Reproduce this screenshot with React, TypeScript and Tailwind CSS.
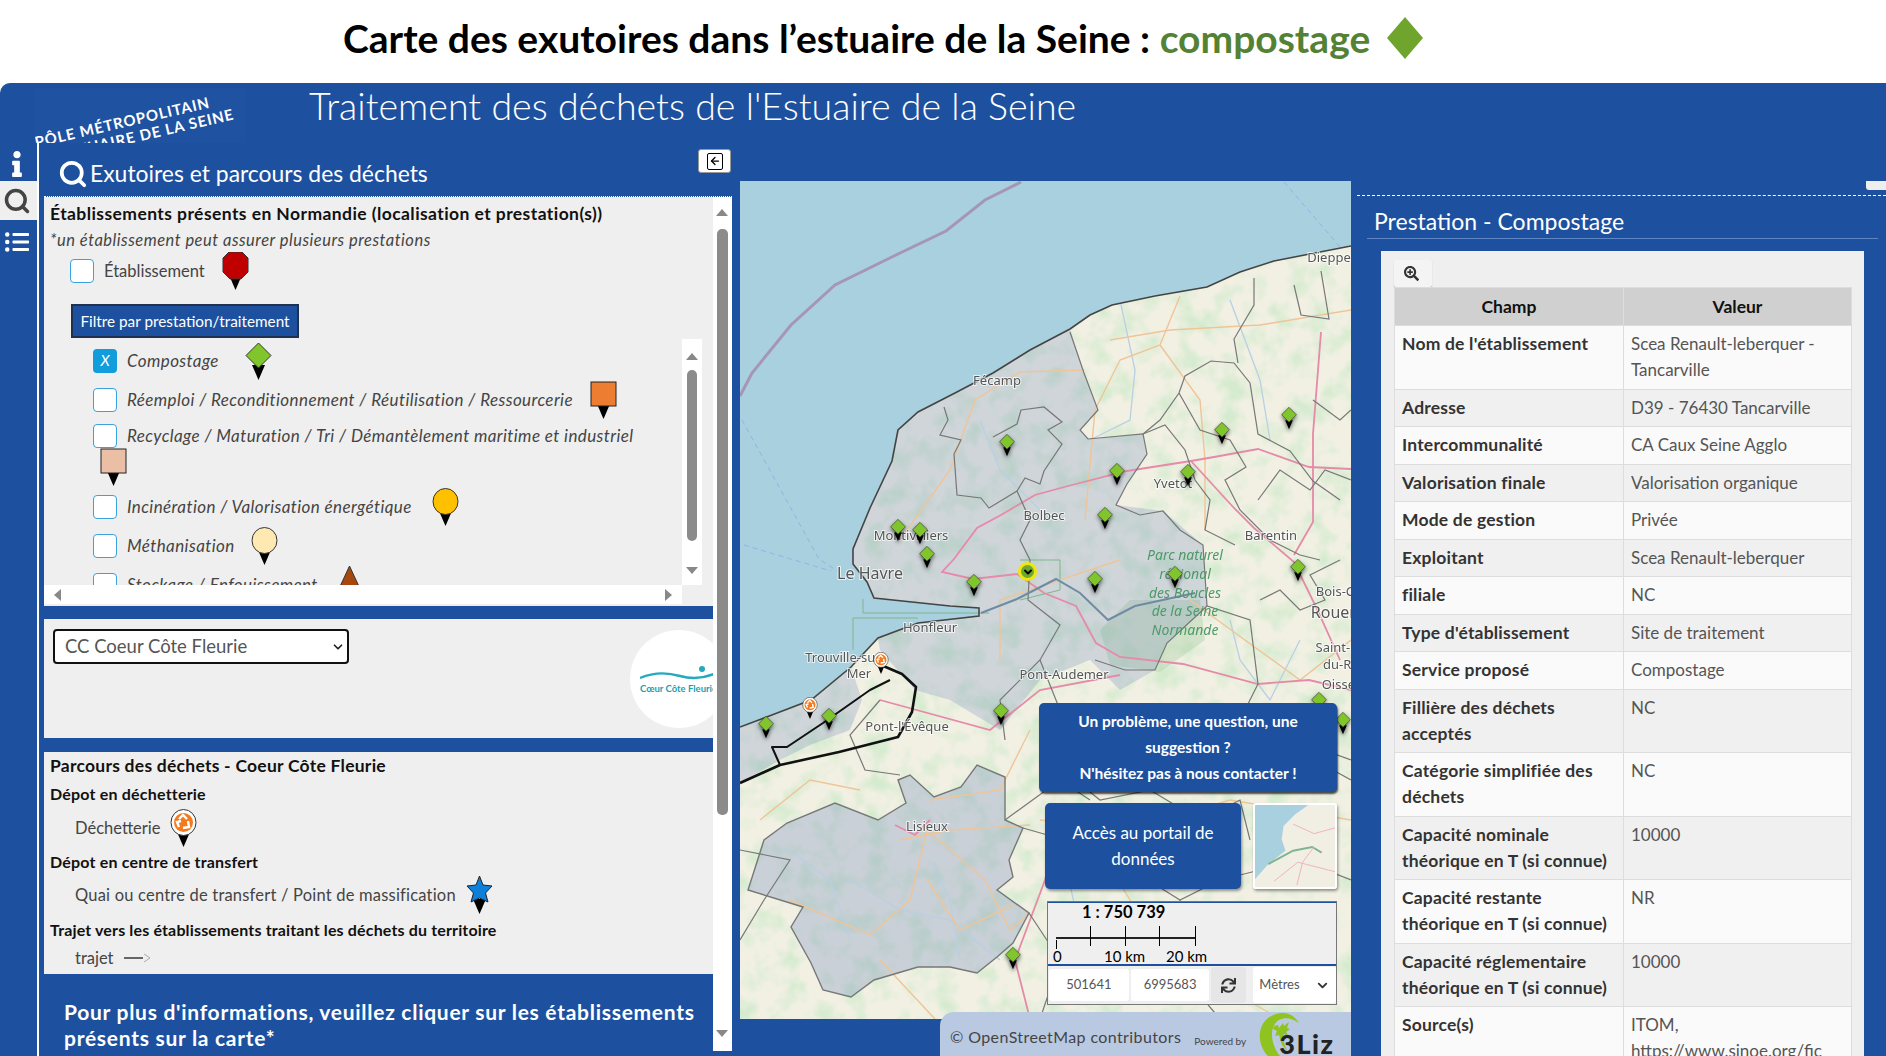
import { ArrowLeft, ChevronDown, Search } from "lucide-react";
import { FaInfo, FaListUl, FaSearchPlus, FaSync } from "react-icons/fa";

type PinKind = "octagon" | "diamond" | "orange" | "peach" | "yellow" | "cream" | "triangle" | "star" | "recycle";

function Pin({ kind, className }: { kind: PinKind; className?: string }) {
  return (
    <svg viewBox="0 0 27 38" className={className}>
      <polygon points="7,23 20,23 13.5,38" fill="#000" />
      {kind === "octagon" && <polygon points="7,0 20,0 26,6 26,20 19,27 8,27 1,20 1,6" fill="#c00000" stroke="#333" />}
      {kind === "diamond" && <polygon points="13.5,1 26,13.5 13.5,26 1,13.5" fill="#7fc52b" stroke="#333" />}
      {kind === "orange" && <rect x="1" y="1" width="25" height="24" fill="#ed7d31" stroke="#222" />}
      {kind === "peach" && <rect x="1" y="1" width="25" height="24" fill="#ebbfa6" stroke="#222" />}
      {kind === "yellow" && <ellipse cx="13.5" cy="13.5" rx="12.5" ry="13" fill="#ffc000" stroke="#333" />}
      {kind === "cream" && <ellipse cx="13.5" cy="13.5" rx="12.5" ry="13" fill="#ffe9b3" stroke="#333" />}
      {kind === "triangle" && <polygon points="13.5,0 26,27 1,27" fill="#a6470e" stroke="#333" />}
      {kind === "star" && (
        <polygon
          points="13.5,0 17,9 26,10 19.5,17 22,26 13.5,22 5,26 7.5,17 1,10 10,9"
          fill="#0f7fdc"
          stroke="#222"
        />
      )}
      {kind === "recycle" && (
        <>
          <ellipse cx="13.5" cy="13.5" rx="12.5" ry="13" fill="#fff" stroke="#333" />
          <circle cx="13.5" cy="13.5" r="9.5" fill="#f47a20" />
          <path d="M9 10l4-4 4 4M18 12l1 6-6 1M9 18l-2-5 4-1" fill="none" stroke="#fff" strokeWidth="2.4" />
        </>
      )}
    </svg>
  );
}

function Check({ checked }: { checked?: boolean }) {
  return checked ? (
    <span className="w-[24px] h-[24px] shrink-0 rounded-[4px] bg-[#119ddb] text-white text-[15px] flex items-center justify-center">
      X
    </span>
  ) : (
    <span className="w-[24px] h-[24px] shrink-0 rounded-[4px] bg-white border border-[#38a3de]" />
  );
}

function LegendRow({ label, pin, gap, checked }: { label: string; pin: PinKind; gap: string; checked?: boolean }) {
  return (
    <div className="flex items-center h-[39px] pl-[49px] italic">
      <Check checked={checked} />
      <span className="ml-[10px] text-[17px] tracking-[0.4px] text-[#444] whitespace-nowrap">{label}</span>
      <Pin kind={pin} className={`w-[27px] h-[38px] shrink-0 ${gap}`} />
    </div>
  );
}

const sea =
  "740,181 1351,181 1351,246 1320,252 1274,261 1240,272 1207,287 1155,296 1112,305 1090,315 1070,329 1030,350 993,373 955,393 918,412 898,430 892,461 870,508 853,549 853,564 867,582 874,598 950,606 979,608 979,616 918,623 878,638 851,667 811,700 764,718 740,727";

const estuary =
  "1070,329 1084,373 1098,410 1080,430 1088,439 1143,434 1147,454 1127,484 1116,505 1163,511 1203,545 1207,606 1167,643 1155,670 1120,690 1090,660 1040,680 1000,730 950,700 915,690 880,650 878,638 918,623 979,616 979,608 950,606 874,598 867,582 853,564 853,549 870,508 892,461 898,430 918,412 955,393 993,373 1030,350";

const coteFleurie = "740,727 764,718 811,700 851,667 862,700 850,730 810,745 780,760 740,783";

const lisieux =
  "898,780 910,775 934,797 961,787 977,765 1005,777 1005,820 1023,828 1009,860 1013,877 997,890 1029,913 1013,943 997,957 977,973 950,967 918,967 874,980 851,997 823,990 811,963 791,927 803,907 748,890 764,840 787,823 835,803 878,820 906,803";

const boundaries = [
  "944,407 948,420 940,435 961,440 954,454 957,495 981,498 989,508 1017,491 1025,478 1040,484 1044,471 1062,444 1048,430 1062,422 1044,407 1021,410 1017,424 993,437",
  "1070,332 1084,373 1098,410 1080,430 1088,439 1143,434 1147,454 1127,484 1116,505 1140,515 1163,511 1180,530 1203,545 1207,606",
  "1143,434 1160,420 1179,393 1185,376 1211,361 1234,363 1250,383 1258,434 1290,451 1313,481 1340,500",
  "1179,393 1200,430 1230,440 1246,467 1225,480 1240,510 1270,540 1300,555 1320,560",
  "1254,278 1254,305 1234,339 1238,363",
  "1294,285 1301,315 1329,319 1321,271",
  "1143,434 1165,425 1185,450 1195,480 1210,500 1205,530 1235,545",
  "1313,400 1340,420 1351,410",
  "1258,500 1280,470 1310,490 1325,470 1351,480",
  "1340,560 1310,575 1325,600 1300,610 1280,590 1260,600",
  "1017,491 1030,520 1020,540 1030,560 1028,600 1060,625 1040,660 1000,700 1005,740",
  "1095,660 1125,670 1155,670 1167,643 1207,606 1250,620 1258,684 1240,720 1351,760",
  "880,700 850,735 865,770 900,775",
  "1040,660 1060,710 1050,760 1100,800 1150,790 1170,730 1220,760 1260,730 1351,780",
  "1023,828 1100,850 1180,900 1220,880 1300,860 1351,880",
  "1029,913 1060,960 1040,1019",
  "740,850 790,860 764,900 740,940",
  "1005,820 1060,780 1090,800",
  "1150,790 1200,820 1240,800 1250,840",
  "1180,900 1170,960 1220,1019",
];

const pinkRoads = [
  "1351,469 1309,467 1258,449 1214,457 1191,461 1127,471 1068,486 1035,495 1001,515 977,528 954,559 942,572 973,579 1017,574 1044,593 1076,606 1096,643 1120,657 1183,664 1258,684 1309,680 1351,690",
  "1191,461 1234,508 1254,528 1294,562 1317,609 1340,660",
  "1321,332 1313,434 1313,522 1294,555",
  "1030,1019 1015,960 1045,880 1060,820",
  "930,820 915,835 895,825",
  "880,700 990,730 1040,690 1120,675",
];

const orangeRoads = [
  "1180,296 1160,345 1120,360 1095,410 1085,520",
  "1084,370 1020,372 975,400 950,470 900,540",
  "1351,310 1260,325 1170,330 1110,340",
  "1160,345 1200,400 1205,460 1205,530",
  "1120,560 1000,600 1000,660",
  "900,840 950,830 1030,825",
  "927,830 910,900 870,935 790,900",
  "927,830 985,880 1010,930 1029,913",
  "927,880 960,930 1013,905",
  "1040,820 1130,830 1230,800 1351,820",
  "880,960 935,1019",
  "1100,850 1160,950 1280,1019",
  "1030,730 1000,790 930,800",
  "1190,600 1300,680 1351,640",
  "760,820 810,780 860,790",
];

const rivers = [
  "1120,300 1135,370 1130,420 1090,440",
  "1230,300 1260,380 1270,440",
  "850,880 900,910 950,920 1000,960",
  "790,850 830,880 850,940",
  "930,860 950,900 960,960",
  "1060,840 1080,930 1140,1000",
  "980,420 1000,470 1050,520",
  "1230,620 1240,660 1270,700 1300,640",
];

const labels = [
  { t: "Fécamp", x: 997, y: 385, s: 13 },
  { t: "Bolbec", x: 1044, y: 520, s: 13 },
  { t: "Le Havre", x: 870, y: 579, s: 16 },
  { t: "Montivilliers", x: 911, y: 540, s: 13 },
  { t: "Yvetot", x: 1173, y: 488, s: 13 },
  { t: "Barentin", x: 1271, y: 540, s: 13 },
  { t: "Honfleur", x: 930, y: 632, s: 13 },
  { t: "Trouville-sur-", x: 845, y: 662, s: 13 },
  { t: "Mer", x: 859, y: 678, s: 13 },
  { t: "Pont-Audemer", x: 1064, y: 679, s: 13 },
  { t: "Dieppe", x: 1329, y: 262, s: 13 },
  { t: "Bois-Guillaume", x: 1362, y: 596, s: 13 },
  { t: "Rouen", x: 1335, y: 618, s: 16 },
  { t: "Saint-Étienne-", x: 1358, y: 652, s: 13 },
  { t: "du-Rouvray", x: 1358, y: 669, s: 13 },
  { t: "Oissel", x: 1340, y: 689, s: 13 },
  { t: "Pont-l'Évêque", x: 907, y: 731, s: 13 },
  { t: "Lisieux", x: 927, y: 831, s: 13 },
];

const parc = [
  { t: "Parc naturel", y: 560 },
  { t: "régional", y: 579 },
  { t: "des Boucles", y: 598 },
  { t: "de la Seine", y: 616 },
  { t: "Normande", y: 635 },
];

const mapPins = [
  [1007, 442], [1222, 430], [1289, 415], [1117, 471], [1188, 472], [1105, 515], [898, 527], [920, 530],
  [927, 554], [974, 582], [1095, 579], [1175, 574], [1298, 567], [1319, 700], [766, 724], [829, 716],
  [1001, 711], [1343, 720], [1013, 955],
];

function BaseMap() {
  return (
    <svg viewBox="740 181 611 838" className="absolute inset-0 w-full h-full blur-[0.5px]">
      <defs>
        {/* speckled forest patches, the tiles are too blurry to draw one by one */}
        <filter id="mottle" x="0" y="0" width="100%" height="100%">
          <feTurbulence type="fractalNoise" baseFrequency="0.045" numOctaves="3" seed="7" />
          <feColorMatrix values="0 0 0 0 0.66  0 0 0 0 0.83  0 0 0 0 0.62  0 2.6 0 0 -1.12" />
        </filter>
      </defs>
      <rect x="740" y="181" width="611" height="838" fill="#f1f0e3" />
      <rect x="740" y="181" width="611" height="838" filter="url(#mottle)" />
      <polygon points="1130,600 1200,600 1205,640 1160,672 1110,665 1100,630" fill="#a9cfa4" opacity="0.4" />
      <polygon points={sea} fill="#a9d0de" />
      <polygon points={estuary} fill="#6f88bd" opacity="0.26" />
      <polygon points={coteFleurie} fill="#6f88bd" opacity="0.26" />
      <polygon points={lisieux} fill="#6f88bd" opacity="0.3" />
      <polyline
        points="740,396 752,373 791,325 835,285 898,254 946,231 985,200 1021,182"
        fill="none"
        stroke="#a596b5"
        strokeWidth="3"
      />
      <g fill="none" stroke="#8fb4e6" strokeDasharray="5 4">
        <polyline points="1284,182 1341,248" />
        <polyline points="742,420 819,559 839,572" />
        <polyline points="744,545 831,571" />
      </g>
      <g fill="none" stroke="#7fb58e">
        <polyline points="863,599 863,613 989,613" />
        <polyline points="853,650 853,618 918,618" />
        <polyline points="1020,600 1060,590 1060,560 1020,560" />
      </g>
      <g fill="none" stroke="#b9cfe4" strokeWidth="1.3">
        {rivers.map((r) => (
          <polyline key={r} points={r} />
        ))}
      </g>
      <g fill="none" stroke="#efc597" strokeWidth="1.4">
        {orangeRoads.map((r) => (
          <polyline key={r} points={r} />
        ))}
      </g>
      <g fill="none" stroke="#e58aa8" strokeWidth="1.8">
        {pinkRoads.map((r) => (
          <polyline key={r} points={r} />
        ))}
      </g>
      <g fill="none" stroke="#777" strokeWidth="1.2">
        {boundaries.map((b) => (
          <polyline key={b} points={b} />
        ))}
      </g>
      <polygon points={lisieux} fill="none" stroke="#777" strokeWidth="1.4" />
      <polyline
        points="981,613 1017,599 1056,579 1080,593 1108,620 1135,606 1195,593"
        fill="none"
        stroke="#6f8ba3"
        strokeWidth="2"
      />
      <polyline
        points="1351,246 1320,252 1274,261 1240,272 1207,287 1155,296 1112,305 1090,315 1070,329 1030,350 993,373 955,393 918,412 898,430 892,461 870,508 853,549 853,564 867,582 874,598 950,606 979,608 979,616 918,623 878,638 851,667 811,700 764,718 740,727"
        fill="none"
        stroke="#444"
        strokeWidth="1.6"
      />
      <g fill="none" stroke="#111" strokeLinejoin="round">
        <polyline points="881,665 902,674 916,687 912,712 898,737 839,752 780,765 740,783" strokeWidth="2.6" />
        <polyline points="890,680 870,690 823,723 787,747 772,747 780,765" strokeWidth="2" />
      </g>
      {labels.map((l) => (
        <text
          key={l.t}
          x={l.x}
          y={l.y}
          textAnchor="middle"
          fontSize={l.s}
          fill="#555"
          stroke="#ffffff"
          strokeOpacity="0.7"
          strokeWidth="2"
          paintOrder="stroke"
          fontFamily="Noto Sans, sans-serif"
        >
          {l.t}
        </text>
      ))}
      {parc.map((l) => (
        <text
          key={l.t}
          x={1185}
          y={l.y}
          textAnchor="middle"
          fontSize="14"
          fontStyle="italic"
          fill="#4d9a6a"
          fontFamily="Noto Sans, sans-serif"
        >
          {l.t}
        </text>
      ))}
    </svg>
  );
}

function MiniMap() {
  return (
    <svg viewBox="0 0 84 86" className="w-full h-full">
      <rect width="84" height="86" fill="#f1efe4" />
      <polygon points="0,0 56,0 42,10 30,22 28,36 32,48 14,62 0,78" fill="#a9d0de" />
      <polyline points="14,62 40,48 60,44 70,50" fill="none" stroke="#7fb58e" strokeWidth="2" />
      <polyline points="40,20 62,30 84,24" fill="none" stroke="#eeb0c0" />
      <polyline points="20,80 45,60 84,70" fill="none" stroke="#eeb0c0" />
      <polyline points="44,84 50,60 62,44" fill="none" stroke="#eeb0c0" />
    </svg>
  );
}

function MapView() {
  return (
    <div className="relative w-[611px] h-[838px] overflow-hidden font-[Lato,sans-serif]">
      <BaseMap />
      {mapPins.map(([x, y]) => (
        <div key={`${x}-${y}`} className="absolute" style={{ left: x - 740 - 8, top: y - 181 - 9 }}>
          <Pin kind="diamond" className="w-[16px] h-[24px] drop-shadow-[0_2px_2px_rgba(0,0,0,0.6)]" />
        </div>
      ))}
      <div className="absolute left-[278px] top-[381px] w-[19px] h-[19px] rounded-full border-[3px] border-[#efe60f] bg-[#6fa82c] flex items-center justify-center">
        <ChevronDown className="w-[12px] h-[12px] text-black" strokeWidth={4} />
      </div>
      <Pin kind="recycle" className="absolute left-[133px] top-[471px] w-[16px] h-[22px]" />
      <Pin kind="recycle" className="absolute left-[62px] top-[516px] w-[16px] h-[22px]" />

      <div className="absolute left-[299px] top-[522px] w-[298px] h-[89px] rounded-[5px] bg-[#1d519f] text-white text-[15.5px] font-bold text-center leading-[26px] pt-[5px] shadow-[1px_2px_2px_rgba(0,0,0,0.7)]">
        Un problème, une question, une
        <br />
        suggestion ?
        <br />
        N'hésitez pas à nous contacter !
      </div>
      <div className="absolute left-[305px] top-[622px] flex gap-[12px]">
        <div className="w-[196px] h-[86px] rounded-[5px] bg-[#1d519f] text-white text-[17px] text-center leading-[26px] pt-[17px] shadow-[1px_2px_3px_rgba(0,0,0,0.4)]">
          Accès au portail de
          <br />
          données
        </div>
        <div className="w-[84px] h-[86px] rounded-[3px] border-[2px] border-white overflow-hidden shadow-[1px_2px_3px_rgba(0,0,0,0.4)]">
          <MiniMap />
        </div>
      </div>
      <div className="absolute left-[307px] top-[720px] w-[290px] border border-[#777]">
        <div className="relative h-[64px] bg-[#efefef] border-t border-b-2 border-[#1d519f] text-black">
          <div className="absolute left-[34px] -top-[3px] text-[16.5px] font-bold">1 : 750 739</div>
          <div className="absolute left-[8px] top-[34px] w-[140px] h-[2px] bg-[#222]" />
          <div className="absolute left-[8px] top-[37px] w-px h-[9px] bg-black" />
          <div className="absolute left-[42px] top-[23px] w-px h-[20px] bg-black" />
          <div className="absolute left-[77px] top-[23px] w-px h-[20px] bg-black" />
          <div className="absolute left-[111px] top-[23px] w-px h-[20px] bg-black" />
          <div className="absolute left-[147px] top-[23px] w-px h-[20px] bg-black" />
          <div className="absolute left-[5px] top-[44px] text-[15px] leading-[18px]">0</div>
          <div className="absolute left-[56px] top-[44px] text-[15px] leading-[18px]">10 km</div>
          <div className="absolute left-[118px] top-[44px] text-[15px] leading-[18px]">20 km</div>
        </div>
        <div className="flex items-center h-[38px] bg-[#efefef] gap-[2px] pl-[1px] text-[13px] text-[#555]">
          <div className="w-[80px] h-[32px] bg-white rounded-[3px] flex items-center justify-center">501641</div>
          <div className="w-[79px] h-[32px] bg-white rounded-[3px] flex items-center justify-center">6995683</div>
          <div className="w-[35px] h-[36px] flex items-center justify-center rounded-[3px] bg-[#e6e6e6] text-[#333]">
            <FaSync className="w-[15px] h-[15px]" />
          </div>
          <div className="ml-[5px] w-[83px] h-[36px] bg-white rounded-[3px] flex items-center justify-between px-[6px]">
            Mètres
            <ChevronDown className="w-[15px] h-[15px] text-[#333]" strokeWidth={3} />
          </div>
        </div>
      </div>
    </div>
  );
}

function Footer() {
  return (
    <div className="relative flex-1 flex justify-end">
      <div className="w-[411px] h-[44px] -mt-[7px] rounded-tl-[14px] bg-[#b9c9e2] flex items-start pl-[10px] pt-[14px] text-[#444] overflow-hidden">
        <span className="text-[16px] tracking-[0.4px] leading-[22px] whitespace-nowrap">© OpenStreetMap contributors</span>
        <span className="ml-[13px] mt-[8px] text-[10px] leading-[14px] whitespace-nowrap">Powered by</span>
        <div className="relative ml-[12px] h-[44px] w-[82px] -mt-[14px]">
          <svg viewBox="0 0 82 44" className="absolute left-0 top-0 w-[82px] h-[44px]">
            <path d="M10 44C-2 32-2 8 18 2c10-3 18 1 23 9-7-5-14-6-20-3-9 5-10 22 1 36z" fill="#8fc31f" />
            <path
              d="M16 14l4-1 1 3 4-5 1 3 5-4-2 6 3 1-4 3 3 4-5-2-1 4 2 8 3 6-6-7-3-10-4 1 2-5-4-2z"
              fill="#8fc31f"
            />
          </svg>
          <span className="absolute left-[21px] top-[15px] text-[27px] tracking-[1.5px] leading-[34px] font-black text-[#222]">
            3Liz
          </span>
        </div>
      </div>
    </div>
  );
}

const tableRows: [string, string][] = [
  ["Nom de l'établissement", "Scea Renault-leberquer - Tancarville"],
  ["Adresse", "D39 - 76430 Tancarville"],
  ["Intercommunalité", "CA Caux Seine Agglo"],
  ["Valorisation finale", "Valorisation organique"],
  ["Mode de gestion", "Privée"],
  ["Exploitant", "Scea Renault-leberquer"],
  ["filiale", "NC"],
  ["Type d'établissement", "Site de traitement"],
  ["Service proposé", "Compostage"],
  ["Fillière des déchets acceptés", "NC"],
  ["Catégorie simplifiée des déchets", "NC"],
  ["Capacité nominale théorique en T (si connue)", "10000"],
  ["Capacité restante théorique en T (si connue)", "NR"],
  ["Capacité réglementaire théorique en T (si connue)", "10000"],
  ["Source(s)", "ITOM, https://www.sinoe.org/fic"],
];

function DetailPanel() {
  return (
    <div className="w-[535px] relative pt-[52px]">
      <div className="absolute right-0 top-[38px] w-[20px] h-[9px] rounded-bl-[3px] bg-[#eee]" />
      <div className="ml-[6px] border-t border-dashed border-white" />
      <div className="ml-[16px] mr-[8px] mt-[10px] h-[33px] border-b border-[#5f86c4] pl-[7px] text-white text-[23px] leading-[30px]">
        Prestation - Compostage
      </div>
      <div className="ml-[30px] mr-[22px] mt-[12px] h-[805px] bg-[#efefef] px-[13px] pt-[9px] overflow-hidden">
        <div className="w-[38px] h-[27px] rounded-[2px] bg-[#f4f4f4] shadow-[0_1px_1px_rgba(0,0,0,0.3)] flex items-center pl-[10px] text-[#333]">
          <FaSearchPlus className="w-[15px] h-[15px]" />
        </div>
        <table className="w-[457px] table-fixed border-collapse leading-[26px]">
          <colgroup>
            <col className="w-[229px]" />
            <col className="w-[228px]" />
          </colgroup>
          <thead>
            <tr className="bg-[#d0d0d0] text-[#111] h-[38px] text-[17.5px]">
              <th className="border border-[#ddd] font-bold">Champ</th>
              <th className="border border-[#ddd] font-bold">Valeur</th>
            </tr>
          </thead>
          <tbody>
            {tableRows.map(([k, v], i) => (
              <tr key={k} className={i % 2 === 0 ? "bg-[#fafafa]" : "bg-[#f0f0f0]"}>
                <td className="border border-[#ddd] px-[7px] py-[5.25px] align-top font-bold text-[#333] text-[17.5px] tracking-[0.2px]">
                  {k}
                </td>
                <td className="border border-[#ddd] px-[7px] py-[5.25px] align-top text-[#555] text-[17px] break-words">
                  {v}
                </td>
              </tr>
            ))}
          </tbody>
        </table>
      </div>
    </div>
  );
}

function FiltersPanel() {
  return (
    <div className="h-[409px] bg-[#efefef] flex flex-col overflow-hidden">
      <div className="px-[6px] text-[17.5px] tracking-[0.42px] leading-[22px] pt-[6px] font-bold text-[#111] whitespace-nowrap">
        Établissements présents en Normandie (localisation et prestation(s))
      </div>
      <div className="px-[6px] mt-[5px] text-[16.5px] tracking-[0.5px] leading-[20px] italic text-[#444] whitespace-nowrap">
        *un établissement peut assurer plusieurs prestations
      </div>
      <div className="flex items-center h-[38px] pl-[26px] mt-[2px]">
        <Check />
        <span className="ml-[10px] text-[16.5px] text-[#444]">Établissement</span>
        <Pin kind="octagon" className="w-[27px] h-[38px] ml-[17px]" />
      </div>
      <div className="ml-[27px] mt-[14px] w-[228px] h-[34px] bg-[#1d519f] border-2 border-[#20304f] text-white text-[15.3px] flex items-center justify-center whitespace-nowrap">
        Filtre par prestation/traitement
      </div>
      <div className="flex h-[266px] shrink-0 mt-[1px]">
        <div className="w-[638px] flex flex-col">
          <div className="h-[246px] overflow-hidden pt-[2px]">
            <LegendRow label="Compostage" pin="diamond" gap="ml-[26px]" checked />
            <LegendRow label="Réemploi / Reconditionnement / Réutilisation / Ressourcerie" pin="orange" gap="ml-[17px]" />
            <div className="h-[68px] flex flex-col">
              <div className="flex items-center pl-[49px] mt-[5px] italic h-[24px] shrink-0">
                <Check />
                <span className="ml-[10px] text-[17px] tracking-[0.4px] text-[#444] whitespace-nowrap">
                  Recyclage / Maturation / Tri / Démantèlement maritime et industriel
                </span>
              </div>
              <Pin kind="peach" className="w-[27px] h-[38px] ml-[56px] shrink-0" />
            </div>
            <LegendRow label="Incinération / Valorisation énergétique" pin="yellow" gap="ml-[20px]" />
            <LegendRow label="Méthanisation" pin="cream" gap="ml-[16px]" />
            <LegendRow label="Stockage / Enfouissement" pin="triangle" gap="ml-[18px]" />
          </div>
          <div className="h-[19px] bg-white flex items-center justify-between px-[10px] text-[#888]">
            <span className="w-0 h-0 border-y-[6px] border-y-transparent border-r-[7px] border-r-[#888]" />
            <span className="w-0 h-0 border-y-[6px] border-y-transparent border-l-[7px] border-l-[#888]" />
          </div>
        </div>
        <div className="w-[20px] h-[246px] bg-white relative">
          <span className="absolute left-[4px] top-[14px] w-0 h-0 border-x-[6px] border-x-transparent border-b-[7px] border-b-[#888]" />
          <div className="absolute left-[5px] top-[31px] w-[10px] h-[171px] rounded-[5px] bg-[#8b8b8b]" />
          <span className="absolute left-[4px] top-[228px] w-0 h-0 border-x-[6px] border-x-transparent border-t-[7px] border-t-[#888]" />
        </div>
      </div>
    </div>
  );
}

function SelectPanel() {
  return (
    <div className="relative h-[119px] bg-[#efefef] overflow-hidden">
      <div className="ml-[9px] mt-[10px] w-[296px] h-[35px] rounded-[4px] bg-white border-2 border-[#111] flex items-center justify-between pl-[10px] pr-[2px] text-[18.5px] text-[#555]">
        CC Coeur Côte Fleurie
        <ChevronDown className="w-[14px] h-[14px] text-[#222]" strokeWidth={3} />
      </div>
      <div className="absolute left-[586px] top-[11px] w-[98px] h-[98px] rounded-full bg-white flex flex-col items-start pt-[36px] pl-[10px]">
        <svg viewBox="0 0 74 14" className="w-[74px] h-[14px]">
          <path d="M0 12C14 6 26 6 40 10s24 2 34-2" fill="none" stroke="#25a9bc" strokeWidth="2.4" />
          <circle cx="62" cy="3" r="3" fill="#25a9bc" />
        </svg>
        <span className="mt-[3px] text-[9.5px] leading-[12px] font-bold text-[#1c9fb4] whitespace-nowrap">
          Cœur Côte Fleurie
        </span>
      </div>
    </div>
  );
}

function RoutePanel() {
  return (
    <div className="h-[222px] bg-[#efefef] px-[6px] text-[#111]">
      <div className="h-[29px] flex items-center text-[17.5px] tracking-[0.25px] font-bold whitespace-nowrap">
        Parcours des déchets - Coeur Côte Fleurie
      </div>
      <div className="mt-[3px] text-[16px] tracking-[0.2px] leading-[20px] font-bold">Dépot en déchetterie</div>
      <div className="flex items-center pl-[25px] mt-[5px] h-[38px] text-[16.5px] text-[#444]">
        Déchetterie
        <Pin kind="recycle" className="w-[27px] h-[38px] ml-[9px]" />
      </div>
      <div className="mt-[5px] text-[16px] tracking-[0.2px] leading-[20px] font-bold">Dépot en centre de transfert</div>
      <div className="flex items-center pl-[25px] h-[38px] mt-[4px] text-[16.5px] tracking-[0.2px] text-[#444] whitespace-nowrap">
        Quai ou centre de transfert / Point de massification
        <Pin kind="star" className="w-[27px] h-[38px] ml-[10px]" />
      </div>
      <div className="mt-[6px] text-[16px] tracking-[0.15px] leading-[20px] font-bold whitespace-nowrap">
        Trajet vers les établissements traitant les déchets du territoire
      </div>
      <div className="flex items-center pl-[25px] mt-[7px] text-[16.5px] leading-[22px] text-[#444]">
        trajet
        <svg viewBox="0 0 28 10" className="ml-[10px] w-[28px] h-[10px]">
          <path d="M0 5h19" stroke="#666" strokeWidth="2" />
          <path d="M20 1l6 4-6 4" fill="none" stroke="#aaa" />
        </svg>
      </div>
    </div>
  );
}

function LeftPanel() {
  return (
    <div className="w-[703px] border-l-2 border-white pl-[5px] pr-[8px] shrink-0">
      <div className="relative h-[53px] flex items-center pl-[14px] pt-[8px]">
        <Search className="w-[30px] h-[30px] text-white" strokeWidth={3} />
        <span className="ml-[2px] text-white text-[22.9px] whitespace-nowrap">Exutoires et parcours des déchets</span>
        <div className="absolute right-[1px] top-[6px] w-[33px] h-[24px] rounded-[3px] bg-white border border-[#999] flex items-center justify-center">
          <span className="w-[16px] h-[17px] border border-black rounded-[2px] flex items-center justify-center">
            <ArrowLeft className="w-[12px] h-[12px] text-black" strokeWidth={2.5} />
          </span>
        </div>
      </div>
      <div className="flex h-[855px] border-t border-dotted border-white">
        <div className="w-[669px]">
          <FiltersPanel />
          <div className="h-[13px]" />
          <SelectPanel />
          <div className="h-[14px]" />
          <RoutePanel />
          <div className="pl-[20px] pr-[4px] pt-[25px] text-white text-[21px] tracking-[0.72px] font-bold leading-[26px]">
            Pour plus d'informations, veuillez cliquer sur les établissements présents sur la carte*
          </div>
        </div>
        <div className="relative w-[19px] bg-white">
          <span className="absolute left-[3px] top-[12px] w-0 h-0 border-x-[6px] border-x-transparent border-b-[7px] border-b-[#888]" />
          <div className="absolute left-[4px] top-[32px] w-[11px] h-[586px] rounded-[5px] bg-[#8b8b8b]" />
          <span className="absolute left-[3px] top-[833px] w-0 h-0 border-x-[6px] border-x-transparent border-t-[7px] border-t-[#888]" />
        </div>
      </div>
    </div>
  );
}

function SideBar() {
  return (
    <div className="w-[37px] shrink-0 flex flex-col items-center">
      <div className="h-[38px] flex items-center text-white pt-[4px] pr-[4px]">
        <FaInfo className="w-[20px] h-[26px]" />
      </div>
      <div className="w-full h-[39px] bg-[#efefef] flex items-center justify-center text-[#444] pr-[3px]">
        <Search className="w-[28px] h-[28px]" strokeWidth={3} />
      </div>
      <div className="mt-[10px] text-white pr-[3px]">
        <FaListUl className="w-[26px] h-[24px]" />
      </div>
    </div>
  );
}

export default function App() {
  return (
    <div className="w-[1886px] h-[1056px] overflow-hidden bg-white font-[Lato,sans-serif]">
      <div className="h-[83px] flex items-center pl-[343px] pb-[7px]">
        <h1 className="text-[39px] font-bold text-black whitespace-nowrap">
          Carte des exutoires dans l’estuaire de la Seine : <span className="text-[#548235]">compostage</span>
        </h1>
        <svg viewBox="0 0 36 42" className="ml-[17px] w-[36px] h-[42px]">
          <polygon points="18,0 36,21 18,42 0,21" fill="#6fa52c" />
        </svg>
      </div>
      <div className="relative h-[973px] rounded-tl-[10px] bg-[#1d519f] overflow-hidden">
        <div className="h-[60px] relative">
          <div className="absolute left-[35px] top-[5px] w-[210px] h-[55px] overflow-hidden bg-[#1f53a1]">
            <div className="absolute -left-[2px] top-[46px] -rotate-[13deg] origin-top-left text-white font-bold text-[15px] leading-[17px] tracking-[0.9px] whitespace-nowrap">
              PÔLE MÉTROPOLITAIN
              <br />
              <span className="ml-[22px]">ESTUAIRE DE LA SEINE</span>
            </div>
          </div>
          <h2 className="absolute left-[309px] top-[1px] text-white text-[37.6px] leading-[44px] font-light whitespace-nowrap">
            Traitement des déchets de l'Estuaire de la Seine
          </h2>
        </div>
        <div className="flex h-[913px]">
          <SideBar />
          <LeftPanel />
          <div className="w-[611px] shrink-0 flex flex-col pt-[38px]">
            <MapView />
            <Footer />
          </div>
          <DetailPanel />
        </div>
      </div>
    </div>
  );
}
